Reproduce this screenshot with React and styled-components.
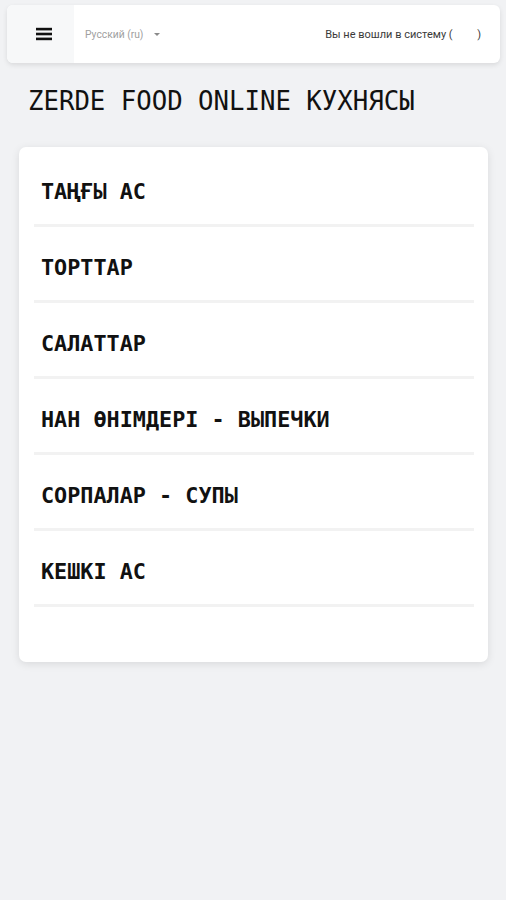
import React from "react";
import styled, { createGlobalStyle } from "styled-components";

const GlobalStyle = createGlobalStyle`
  html, body {
    margin: 0;
    padding: 0;
    background: #f1f2f4;
  }
  body {
    font-family: Roboto, "Liberation Sans", sans-serif;
    min-height: 900px;
  }
`;

const Page = styled.div`
  padding: 5px 6px 0 7px;
`;

const Navbar = styled.nav`
  display: flex;
  align-items: center;
  height: 58px;
  background: #fff;
  border-radius: 6px;
  box-shadow: 0 2px 5px rgba(0, 0, 0, 0.1);
  overflow: hidden;
`;

const MenuToggle = styled.button`
  all: unset;
  box-sizing: border-box;
  width: 67px;
  height: 100%;
  display: flex;
  align-items: center;
  padding-left: 29px;
  background: #f7f8f9;
  cursor: pointer;
`;

const LangSelect = styled.div`
  margin-left: 11px;
  display: flex;
  align-items: center;
  gap: 11px;
  font-size: 10.3px;
  color: #a0a0a0;
`;

const Caret = styled.span`
  width: 0;
  height: 0;
  border-left: 3px solid transparent;
  border-right: 3px solid transparent;
  border-top: 3px solid #8a8a8a;
`;

const Login = styled.div`
  margin-left: auto;
  margin-right: 19px;
  font-size: 11px;
  color: #3a3a3a;
  white-space: pre;
`;

const Title = styled.h1`
  margin: 22px 0 0 21px;
  font-family: "DejaVu Sans Mono", "Liberation Mono", monospace;
  font-weight: normal;
  font-size: 25.7px;
  line-height: 32px;
  color: #111;
`;

const Card = styled.div`
  box-sizing: border-box;
  margin: 30px 12px 0 12px;
  height: 515px;
  background: #fff;
  border-radius: 7px;
  box-shadow: 0 2px 8px rgba(0, 0, 0, 0.1);
  padding: 4px 14px 0 15px;
`;

const Item = styled.a`
  display: block;
  padding: 28px 0 19px 7px;
  line-height: 26px;
  border-bottom: 3px solid #f2f2f2;
  font-family: "DejaVu Sans Mono", "Liberation Mono", monospace;
  font-weight: bold;
  font-size: 21.8px;
  color: #111;
  text-decoration: none;
  cursor: pointer;
`;

const items = [
  "ТАҢҒЫ АС",
  "ТОРТТАР",
  "САЛАТТАР",
  "НАН ӨНІМДЕРІ - ВЫПЕЧКИ",
  "СОРПАЛАР - СУПЫ",
  "КЕШКІ АС",
];

export default function App() {
  return (
    <>
      <GlobalStyle />
      <Page>
        <Navbar>
          <MenuToggle aria-label="Меню">
            <svg width="16" height="14" viewBox="0 0 16 14">
              <rect x="0" y="0.8" width="16" height="2.6" fill="#111" />
              <rect x="0" y="5.7" width="16" height="2.6" fill="#111" />
              <rect x="0" y="10.6" width="16" height="2.6" fill="#111" />
            </svg>
          </MenuToggle>
          <LangSelect>
            Русский (ru)
            <Caret />
          </LangSelect>
          <Login>Вы не вошли в систему (         )</Login>
        </Navbar>
        <Title>ZERDE FOOD ONLINE КУХНЯСЫ</Title>
        <Card>
          {items.map((t) => (
            <Item key={t}>{t}</Item>
          ))}
        </Card>
      </Page>
    </>
  );
}
